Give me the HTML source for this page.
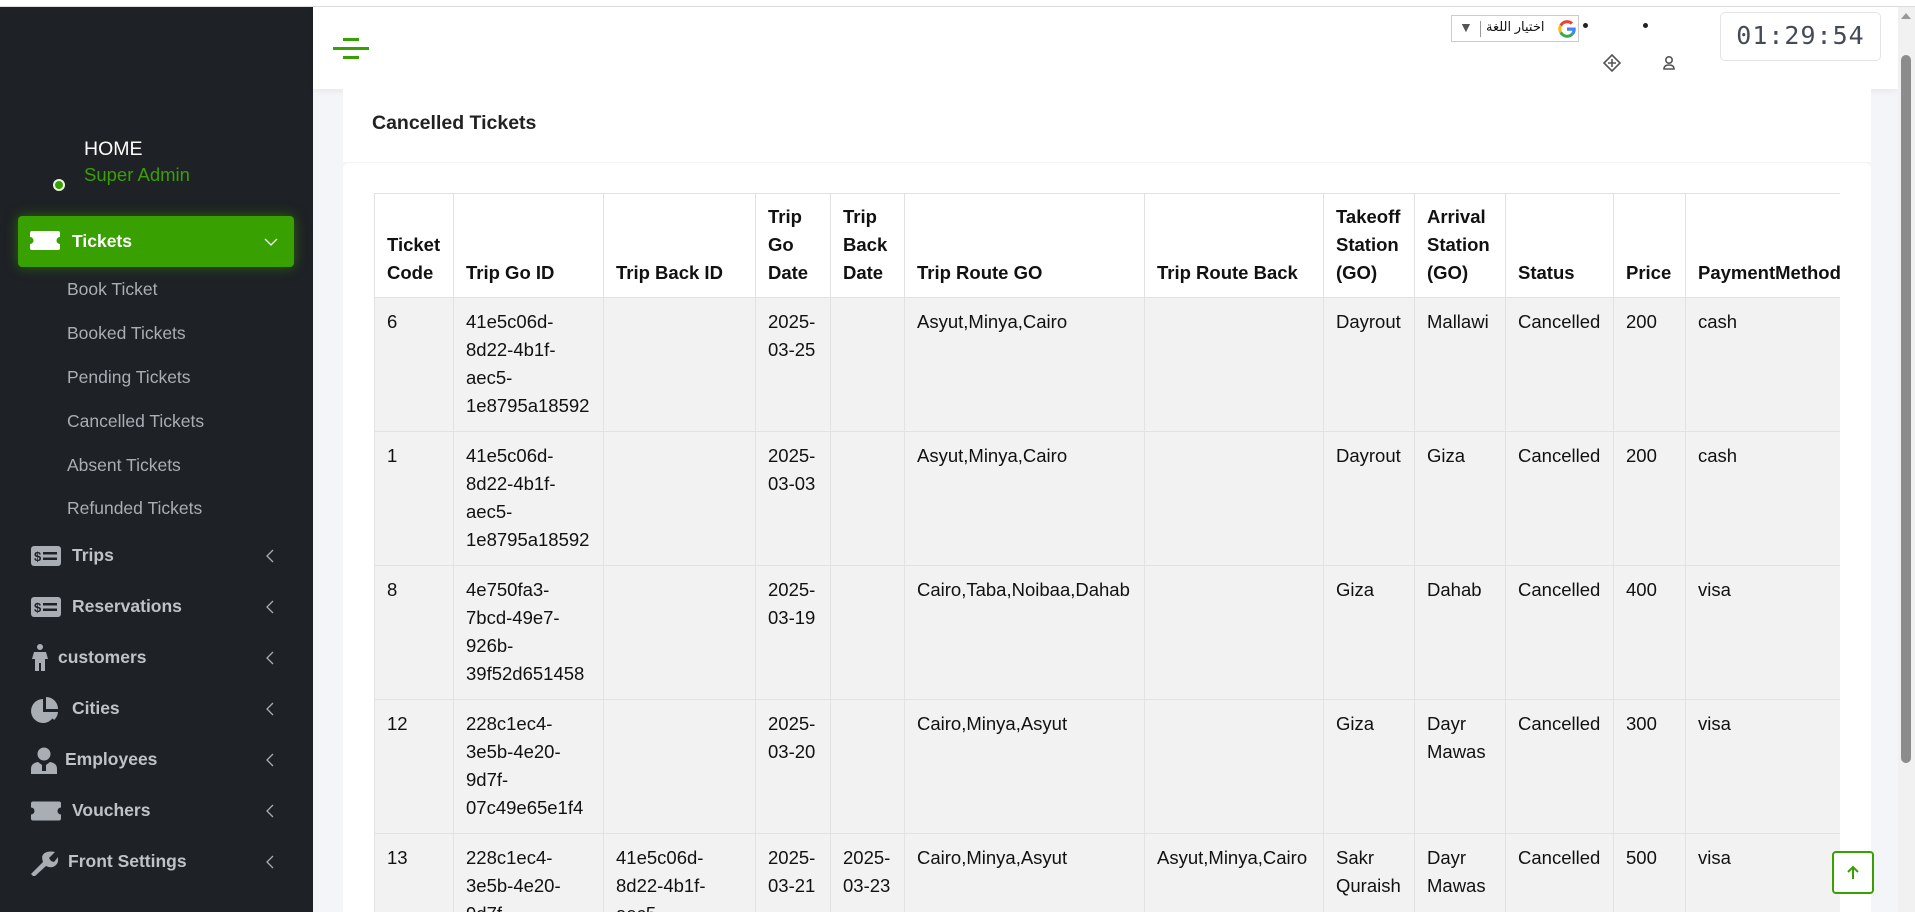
<!DOCTYPE html>
<html><head><meta charset="utf-8">
<style>
*{box-sizing:border-box;margin:0;padding:0}
html,body{overflow:hidden}
body{width:1915px;height:912px;overflow:hidden;background:#f4f5f8;font-family:"Liberation Sans",Arial,sans-serif;position:relative}
.topstrip{position:absolute;left:0;top:0;width:1915px;height:7px;background:#fff;border-bottom:1px solid #dcdcdc}
.sidebar{position:absolute;left:0;top:7px;width:313px;height:905px;background:#1e2125}
.header{position:absolute;left:313px;top:7px;width:1585px;height:82px;background:#fff;box-shadow:0 2px 6px rgba(0,0,0,.06)}
.scroll{position:absolute;left:1898px;top:7px;width:17px;height:905px;background:#f1f1f1}
.thumb{position:absolute;left:3px;top:48px;width:10px;height:708px;background:#8c8c8c;border-radius:5px}
.abs{position:absolute}
.sub{position:absolute;left:67px;color:#a9aeb4;font-size:17.5px}
.item{position:absolute;left:31px;color:#bfc3c8;font-size:17.5px;font-weight:bold;width:250px;height:30px}
.item .t{position:absolute;top:4px}
.item .chev{position:absolute;left:234px;top:8px}
.card1{position:absolute;left:343px;top:89px;width:1528px;height:73px;background:#fff}
.card2{position:absolute;left:343px;top:163px;width:1528px;height:749px;background:#fff;border-radius:6px 6px 0 0}
.tw{position:absolute;left:374px;top:193px;width:1466px;height:719px;overflow:hidden}
table{border-collapse:collapse;table-layout:fixed;width:1680px;font-size:18.5px;line-height:28px;color:#111}
td,th{border:1px solid #e2e2e2;padding:10px 12px;vertical-align:top;text-align:left;word-wrap:break-word}
th{vertical-align:bottom;font-weight:bold;background:#fff;padding:9px 12px 10px}
td{background:#f2f2f2;height:134px}
</style></head><body>
<div class="topstrip"></div>
<div class="sidebar">
  <div class="abs" style="left:53px;top:172px;width:12px;height:12px;border-radius:50%;border:2.5px solid #e8f5e0;background:#3aa000"></div>
  <div class="abs" style="left:84px;top:131px;color:#fff;font-size:19.5px">HOME</div>
  <div class="abs" style="left:84px;top:157px;color:#3aa000;font-size:18.5px">Super Admin</div>
  <div class="abs" style="left:18px;top:209px;width:276px;height:51px;background:#38a000;border-radius:4px;box-shadow:0 0 12px rgba(56,160,0,.55)">
    <svg class="abs" style="left:12px;top:15px" width="30" height="19" viewBox="0 0 30 19"><path d="M2 0H28a2 2 0 0 1 2 2V6a3.5 3.5 0 0 0 0 7V17a2 2 0 0 1-2 2H2a2 2 0 0 1-2-2V13a3.5 3.5 0 0 0 0-7V2a2 2 0 0 1 2-2z" fill="#fff"/></svg>
    <div class="abs" style="left:54px;top:15px;color:#fff;font-weight:bold;font-size:17.5px">Tickets</div>
    <svg class="abs" style="left:246px;top:21px" width="14" height="10"><polyline points="1,2 7,8 13,2" fill="none" stroke="#fff" stroke-width="1.3"/></svg>
  </div>
  <div class="sub" style="top:272px">Book Ticket</div>
  <div class="sub" style="top:316px">Booked Tickets</div>
  <div class="sub" style="top:360px">Pending Tickets</div>
  <div class="sub" style="top:404px">Cancelled Tickets</div>
  <div class="sub" style="top:448px">Absent Tickets</div>
  <div class="sub" style="top:491px">Refunded Tickets</div>

  <div class="item" style="top:534px"><svg class="abs" style="left:0;top:5px" width="30" height="20"><rect width="30" height="20" rx="3" fill="#a9aeb4"/><text x="3" y="15" font-size="13" font-weight="bold" fill="#1e2125" font-family="Liberation Sans">$</text><rect x="12" y="6" width="14" height="2.5" fill="#1e2125"/><rect x="12" y="11.5" width="14" height="2.5" fill="#1e2125"/></svg><span class="t" style="left:41px">Trips</span><svg class="chev" width="10" height="14"><polyline points="8,1 2,7 8,13" fill="none" stroke="#a9aeb4" stroke-width="1.3"/></svg></div>
  <div class="item" style="top:585px"><svg class="abs" style="left:0;top:5px" width="30" height="20"><rect width="30" height="20" rx="3" fill="#a9aeb4"/><text x="3" y="15" font-size="13" font-weight="bold" fill="#1e2125" font-family="Liberation Sans">$</text><rect x="12" y="6" width="14" height="2.5" fill="#1e2125"/><rect x="12" y="11.5" width="14" height="2.5" fill="#1e2125"/></svg><span class="t" style="left:41px">Reservations</span><svg class="chev" width="10" height="14"><polyline points="8,1 2,7 8,13" fill="none" stroke="#a9aeb4" stroke-width="1.3"/></svg></div>
  <div class="item" style="top:636px"><svg class="abs" style="left:0;top:1px" width="18" height="28"><circle cx="9" cy="3" r="3" fill="#a9aeb4"/><path d="M3 8H15L17 15H14V27H10V19H8V27H4V15H1Z" fill="#a9aeb4"/></svg><span class="t" style="left:27px">customers</span><svg class="chev" width="10" height="14"><polyline points="8,1 2,7 8,13" fill="none" stroke="#a9aeb4" stroke-width="1.3"/></svg></div>
  <div class="item" style="top:687px"><svg class="abs" style="left:0;top:2px" width="28" height="28"><path d="M12 3A12 12 0 1 0 24 16H12Z" fill="#a9aeb4"/><path d="M15 1A12 12 0 0 1 27 13H15Z" fill="#a9aeb4"/><path d="M16 16H27A12 12 0 0 1 23 24Z" fill="#a9aeb4"/></svg><span class="t" style="left:41px">Cities</span><svg class="chev" width="10" height="14"><polyline points="8,1 2,7 8,13" fill="none" stroke="#a9aeb4" stroke-width="1.3"/></svg></div>
  <div class="item" style="top:738px"><svg class="abs" style="left:0;top:2px" width="26" height="27"><circle cx="13" cy="7" r="6.5" fill="#a9aeb4"/><path d="M0 27V22Q0 16 7 15L11 18V24H15V18L19 15Q26 16 26 22V27Z" fill="#a9aeb4"/></svg><span class="t" style="left:34px">Employees</span><svg class="chev" width="10" height="14"><polyline points="8,1 2,7 8,13" fill="none" stroke="#a9aeb4" stroke-width="1.3"/></svg></div>
  <div class="item" style="top:789px"><svg class="abs" style="left:0;top:5px" width="30" height="20" viewBox="0 0 30 19"><path d="M2 0H28a2 2 0 0 1 2 2V6a3.5 3.5 0 0 0 0 7V17a2 2 0 0 1-2 2H2a2 2 0 0 1-2-2V13a3.5 3.5 0 0 0 0-7V2a2 2 0 0 1 2-2z" fill="#a9aeb4"/></svg><span class="t" style="left:41px">Vouchers</span><svg class="chev" width="10" height="14"><polyline points="8,1 2,7 8,13" fill="none" stroke="#a9aeb4" stroke-width="1.3"/></svg></div>
  <div class="item" style="top:840px"><svg class="abs" style="left:0;top:3px" width="27" height="26"><path d="M0 24L12 12Q9 4 16 2Q20 1 24 2L18 8L20 11L23 12L27 7Q28 12 25 15Q21 19 15 16L3 27Z" fill="#a9aeb4"/></svg><span class="t" style="left:37px">Front Settings</span><svg class="chev" width="10" height="14"><polyline points="8,1 2,7 8,13" fill="none" stroke="#a9aeb4" stroke-width="1.3"/></svg></div>
</div>

<div class="header">
  <svg class="abs" style="left:20px;top:30px" width="36" height="24"><rect x="10" y="1" width="16" height="3" fill="#38a000"/><rect x="0" y="10" width="36" height="3" fill="#38a000"/><rect x="10" y="19" width="16" height="3" fill="#38a000"/></svg>
  <div class="abs" style="left:1138px;top:8px;width:128px;height:27px;border:1px solid #ccc;background:#fff">
    <span class="abs" style="left:7px;top:3px;font-size:14px;color:#555">▼</span>
    <div class="abs" style="left:28px;top:5px;width:1px;height:16px;background:#999"></div>
    <span class="abs" style="left:34px;top:3px;font-size:13px;color:#111;font-family:'Liberation Sans','DejaVu Sans',sans-serif">اختيار اللغة</span>
    <svg class="abs" style="left:104px;top:2px" width="22" height="22" viewBox="0 0 20 20"><path d="M3.2 6A8 8 0 0 1 15.5 4L13.5 6A5.2 5.2 0 0 0 5.4 7.7Z" fill="#ea4335"/><path d="M3.2 6L5.4 7.7A5.2 5.2 0 0 0 5.4 12.3L3.2 14A8 8 0 0 1 3.2 6Z" fill="#fbbc05"/><path d="M3.2 14L5.4 12.3A5.2 5.2 0 0 0 13.6 13.9L15.8 15.6A8 8 0 0 1 3.2 14Z" fill="#34a853"/><path d="M15.8 15.6L13.6 13.9Q14.6 13 14.9 11.6H10V8.6H17.9Q18.4 13 15.8 15.6Z" fill="#4285f4"/></svg>
  </div>
  <div class="abs" style="left:1270px;top:16px;width:5px;height:5px;border-radius:50%;background:#222"></div>
  <div class="abs" style="left:1330px;top:16px;width:5px;height:5px;border-radius:50%;background:#222"></div>
  <svg class="abs" style="left:1290px;top:47px" width="18" height="18"><path d="M9 1L17 9L9 17L1 9Z M5 9H13M9 5V13" fill="none" stroke="#555" stroke-width="1.6"/></svg>
  <svg class="abs" style="left:1350px;top:48px" width="12" height="16"><circle cx="6" cy="5" r="3.2" fill="none" stroke="#555" stroke-width="1.6"/><path d="M1 14Q1 10 6 10Q11 10 11 14Z" fill="none" stroke="#555" stroke-width="1.6"/></svg>
  <div class="abs" style="left:1407px;top:5px;width:161px;height:49px;border:1px solid #e4e4e4;border-radius:5px;font-family:'DejaVu Sans Mono',monospace;font-size:25px;color:#454b56;text-align:center;line-height:46px;letter-spacing:1px">01:29:54</div>
</div>

<div class="card1"><div class="abs" style="left:29px;top:23px;font-size:19.5px;font-weight:bold;color:#222">Cancelled Tickets</div></div>
<div class="card2"></div>
<div class="tw">
<table>
<colgroup><col style="width:79px"><col style="width:150px"><col style="width:152px"><col style="width:75px"><col style="width:74px"><col style="width:240px"><col style="width:179px"><col style="width:91px"><col style="width:91px"><col style="width:108px"><col style="width:72px"><col style="width:369px"></colgroup>
<tr><th>Ticket Code</th><th>Trip Go ID</th><th>Trip Back ID</th><th>Trip Go Date</th><th>Trip Back Date</th><th>Trip Route GO</th><th>Trip Route Back</th><th>Takeoff Station (GO)</th><th>Arrival Station (GO)</th><th>Status</th><th>Price</th><th>PaymentMethod</th></tr>
<tr><td>6</td><td>41e5c06d-<br>8d22-4b1f-<br>aec5-<br>1e8795a18592</td><td></td><td>2025-<br>03-25</td><td></td><td>Asyut,Minya,Cairo</td><td></td><td>Dayrout</td><td>Mallawi</td><td>Cancelled</td><td>200</td><td>cash</td></tr>
<tr><td>1</td><td>41e5c06d-<br>8d22-4b1f-<br>aec5-<br>1e8795a18592</td><td></td><td>2025-<br>03-03</td><td></td><td>Asyut,Minya,Cairo</td><td></td><td>Dayrout</td><td>Giza</td><td>Cancelled</td><td>200</td><td>cash</td></tr>
<tr><td>8</td><td>4e750fa3-<br>7bcd-49e7-<br>926b-<br>39f52d651458</td><td></td><td>2025-<br>03-19</td><td></td><td>Cairo,Taba,Noibaa,Dahab</td><td></td><td>Giza</td><td>Dahab</td><td>Cancelled</td><td>400</td><td>visa</td></tr>
<tr><td>12</td><td>228c1ec4-<br>3e5b-4e20-<br>9d7f-<br>07c49e65e1f4</td><td></td><td>2025-<br>03-20</td><td></td><td>Cairo,Minya,Asyut</td><td></td><td>Giza</td><td>Dayr Mawas</td><td>Cancelled</td><td>300</td><td>visa</td></tr>
<tr><td>13</td><td>228c1ec4-<br>3e5b-4e20-<br>9d7f-<br>07c49e65e1f4</td><td>41e5c06d-<br>8d22-4b1f-<br>aec5-</td><td>2025-<br>03-21</td><td>2025-<br>03-23</td><td>Cairo,Minya,Asyut</td><td>Asyut,Minya,Cairo</td><td>Sakr Quraish</td><td>Dayr Mawas</td><td>Cancelled</td><td>500</td><td>visa</td></tr>
</table>
</div>
<div class="abs" style="left:1832px;top:851px;width:42px;height:43px;border:2px solid #38a000;border-radius:4px;background:#fff">
  <svg class="abs" style="left:13px;top:12px" width="12" height="16"><path d="M6 14V2M1 7L6 2L11 7" fill="none" stroke="#38a000" stroke-width="2"/></svg>
</div>
<div class="scroll"><div class="abs" style="left:3px;top:6px;width:0;height:0;border-left:5px solid transparent;border-right:5px solid transparent;border-bottom:6px solid #999"></div><div class="thumb"></div></div>
</body></html>
